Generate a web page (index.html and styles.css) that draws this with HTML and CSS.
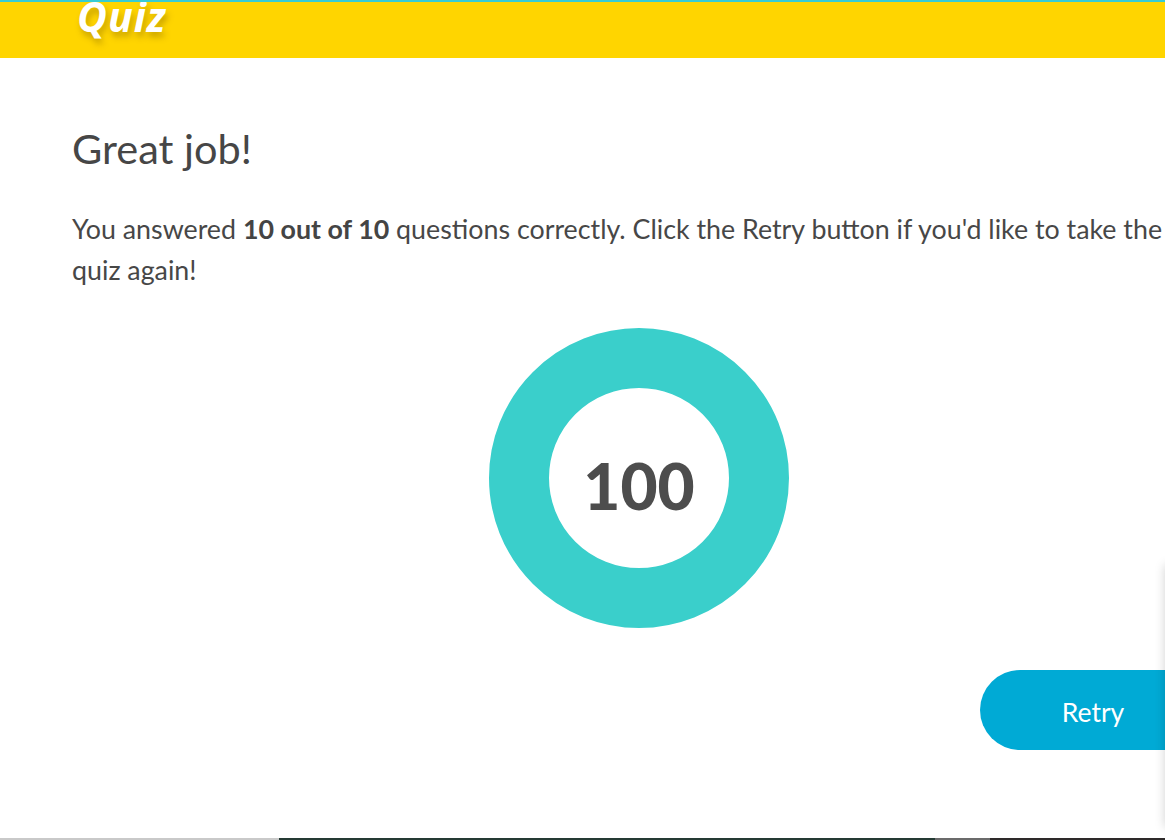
FILE: index.html
```html
<!DOCTYPE html>
<html lang="en">
<head>
<meta charset="utf-8">
<title>Quiz</title>
<link rel="stylesheet" href="styles.css">
</head>
<body>
<div class="page">
  <header class="topbar">
    <h1 class="brand">Quiz</h1>
  </header>
  <main class="card">
    <section class="result">
      <h2 class="result-title">Great job!</h2>
      <p class="result-text">You answered <strong>10 out of 10</strong> questions correctly. Click the Retry button if you'd like to take the quiz again!</p>
      <div class="score">
        <div class="score-ring"><span class="score-value">100</span></div>
      </div>
      <div class="actions">
        <button class="retry" type="button">Retry</button>
      </div>
    </section>
  </main>
  <div class="bottom-strip">
    <span class="strip-a"></span>
    <span class="strip-b"></span>
    <span class="strip-c"></span>
    <span class="strip-d"></span>
  </div>
</div>
<div class="side-panel"></div>
</body>
</html>
```

FILE: styles.css
```css
html, body {
  margin: 0;
  padding: 0;
  overflow: hidden;
  background: #ffffff;
}
body {
  width: 1165px;
  height: 840px;
  position: relative;
  font-family: "Lato", "Liberation Sans", sans-serif;
  color: #474747;
}
.page {
  width: 1278px;
  height: 840px;
  display: flex;
  flex-direction: column;
}
.topbar {
  height: 56px;
  border-top: 2px solid #38ccd2;
  background: #ffd500;
  display: flex;
  align-items: flex-end;
  padding-left: 77px;
  overflow: hidden;
}
.brand {
  margin: 0 0 22px 0;
  font-family: "Open Sans", "Liberation Sans", sans-serif;
  font-style: italic;
  font-weight: 700;
  font-size: 41px;
  line-height: 40px;
  color: #ffffff;
  letter-spacing: 1px;
  text-shadow: 2px 5px 6px rgba(120, 90, 0, 0.4);
}
.card {
  flex: 1;
  background: #ffffff;
  border-bottom-left-radius: 8px;
}
.result {
  padding: 0 72px;
  display: flex;
  flex-direction: column;
}
.result-title {
  margin: 64px 0 0 0;
  font-weight: 400;
  font-size: 41.5px;
  line-height: 52px;
  color: #464646;
}
.result-text {
  margin: 35px 0 0 0;
  max-width: 1105px;
  font-size: 26.8px;
  line-height: 41px;
  color: #474747;
}
.result-text strong {
  font-weight: 700;
  color: #444444;
}
.score {
  margin-top: 37px;
  display: flex;
  justify-content: center;
}
.score-ring {
  width: 180px;
  height: 180px;
  border: 60px solid #3acfcb;
  border-radius: 50%;
  display: flex;
  align-items: center;
  justify-content: center;
}
.score-value {
  font-weight: 900;
  font-size: 64px;
  color: #4d4d4d;
  margin-top: 14px;
}
.actions {
  margin-top: 42px;
  display: flex;
  justify-content: flex-end;
}
.retry {
  width: 226px;
  height: 80px;
  border: 0;
  border-radius: 40px;
  background: #00aad5;
  color: #ffffff;
  font-family: "Lato", "Liberation Sans", sans-serif;
  font-size: 26.5px;
  padding: 4px 0 0 0;
  cursor: pointer;
}
.bottom-strip {
  height: 2px;
  display: flex;
}
.strip-a { width: 279px; background: #c9c9c9; }
.strip-b { width: 656px; background: #253a34; }
.strip-c { width: 55px; background: #6b6b6b; }
.strip-d { flex: 1; background: #2e2a2a; }
.side-panel {
  position: absolute;
  left: 1165px;
  top: 565px;
  width: 300px;
  height: 262px;
  background: #ffffff;
  box-shadow: 0 0 10px rgba(0, 0, 0, 0.18);
}
```
